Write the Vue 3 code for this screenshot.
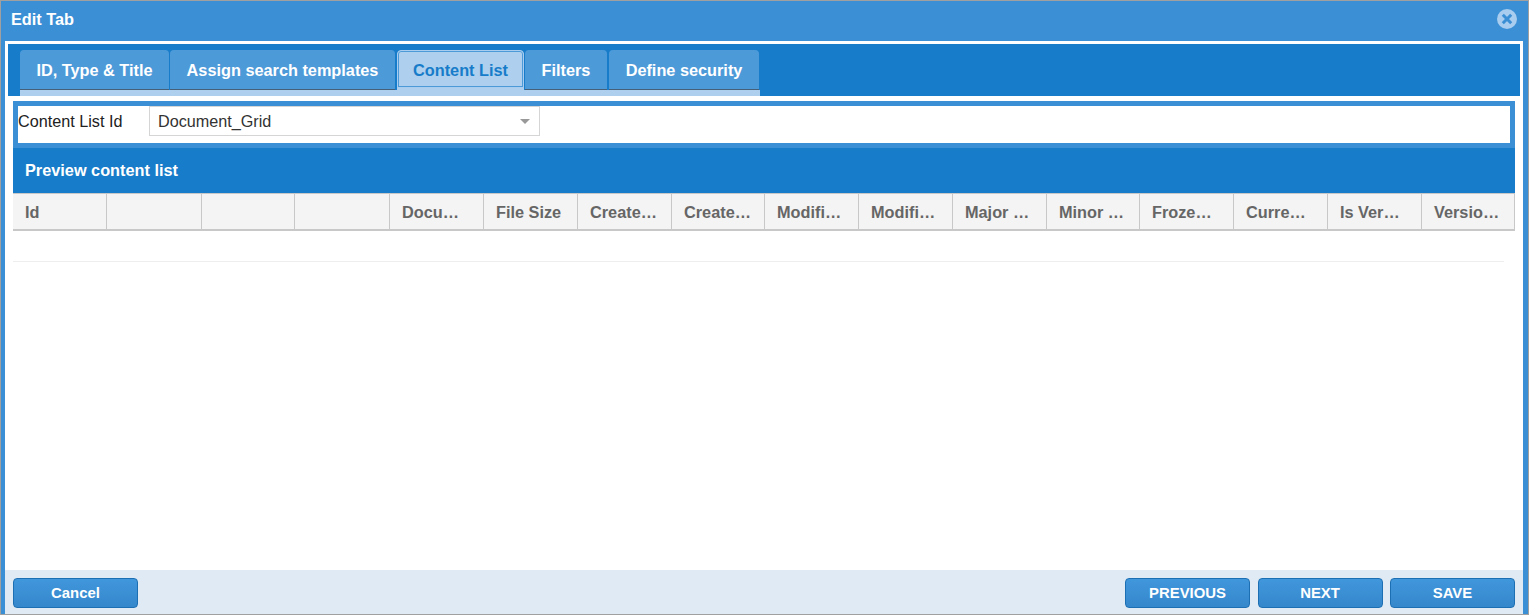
<script setup>
const tabs = [
    { label: 'ID, Type & Title', width: 149 },
    { label: 'Assign search templates', width: 225 },
    { label: 'Content List', width: 127, active: true },
    { label: 'Filters', width: 82 },
    { label: 'Define security', width: 150 },
]

const columns = ['Id', '', '', '', 'Docu…', 'File Size', 'Create…', 'Create…', 'Modifi…', 'Modifi…', 'Major …', 'Minor …', 'Froze…', 'Curre…', 'Is Ver…', 'Versio…']
</script>

<template>
    <div class="dialog">
        <div class="titleBar">
            <span class="title">Edit Tab</span>
            <svg class="closeIcon" width="20" height="20" viewBox="0 0 20 20">
                <circle cx="10" cy="10" r="10" fill="#a9cdee" />
                <path d="M5.8 5.8 L14.2 14.2 M14.2 5.8 L5.8 14.2" stroke="#3b8fd5" stroke-width="3" fill="none" />
            </svg>
        </div>
        <div class="body">
            <div class="tabBar">
                <div class="tabs">
                    <div
                        v-for="tab in tabs"
                        :key="tab.label"
                        class="tab"
                        :class="{ active: tab.active }"
                        :style="{ width: tab.width + 'px' }"
                    >{{ tab.label }}</div>
                </div>
            </div>
            <div class="content">
                <div class="formWrap">
                    <div class="form">
                        <label class="fieldLabel">Content List Id</label>
                        <div class="select">
                            <span>Document_Grid</span>
                            <i class="arrow"></i>
                        </div>
                    </div>
                </div>
                <div class="previewHead">Preview content list</div>
                <div class="gridHead">
                    <div v-for="(col, i) in columns" :key="i" class="cell">{{ col }}</div>
                </div>
                <div class="emptyRow"></div>
            </div>
            <div class="footer">
                <button class="btn">Cancel</button>
                <div class="rightBtns">
                    <button class="btn">PREVIOUS</button>
                    <button class="btn">NEXT</button>
                    <button class="btn">SAVE</button>
                </div>
            </div>
        </div>
    </div>
</template>

<style>
html, body {
    margin: 0;
    height: 100%;
    overflow: hidden;
}
</style>

<style scoped>
.dialog {
    box-sizing: border-box;
    width: 1529px;
    height: 615px;
    display: flex;
    flex-direction: column;
    padding: 0 5px 0 4px;
    background-color: #3b8fd5;
    border: 1px solid #a0a0a0;
    font-family: "Liberation Sans", Arial, sans-serif;
}

.titleBar {
    box-sizing: border-box;
    flex: none;
    height: 40px;
    display: flex;
    align-items: center;
    justify-content: space-between;
    padding: 0 6px 4px 6px;
}

.title {
    color: #fff;
    font-size: 16.3px;
    font-weight: bold;
}

.body {
    flex: 1;
    min-height: 0;
    display: flex;
    flex-direction: column;
    background-color: #fff;
}

.tabBar {
    flex: none;
    height: 52px;
    margin: 3px 3px 0;
    padding: 6px 0 0 12px;
    box-sizing: border-box;
    background-color: #177cc9;
}

.tabs {
    display: flex;
    gap: 1px;
    width: 740px;
    height: 46px;
    background: linear-gradient(transparent 40px, #aed0ee 40px);
}

.tab {
    box-sizing: border-box;
    height: 40px;
    border-radius: 4px 4px 0 0;
    border-bottom: 1px solid #46607a;
    background-color: #4d9ad9;
    color: #fff;
    font-size: 16.3px;
    font-weight: bold;
    line-height: 41px;
    text-align: center;
}

.tab:nth-child(2),
.tab:nth-child(4) {
    margin-right: 1px;
}

.tab.active {
    height: 38px;
    border: 1px solid #a9cdee;
    box-shadow: inset 0 0 0 1px #4d9ad9, 0 2px 0 #aed0ee;
    background-color: #aed0ee;
    color: #177cc9;
    line-height: 38px;
}

.content {
    flex: 1;
    min-height: 0;
    padding: 5px 8px 0;
}

.formWrap {
    height: 47px;
    box-sizing: border-box;
    padding: 5px;
    background-color: #3b8fd5;
}

.form {
    height: 37px;
    display: flex;
    align-items: flex-start;
    background-color: #fff;
}

.fieldLabel {
    width: 131px;
    color: #222;
    font-size: 16.2px;
    line-height: 30px;
}

.select {
    box-sizing: border-box;
    width: 391px;
    height: 30px;
    display: flex;
    align-items: center;
    justify-content: space-between;
    padding: 0 9px 0 8px;
    border: 1px solid #d5d5d5;
    color: #333;
    font-size: 16.2px;
}

.arrow {
    width: 0;
    height: 0;
    border-left: 5px solid transparent;
    border-right: 5px solid transparent;
    border-top: 5px solid #999;
}

.previewHead {
    height: 45px;
    padding-left: 12px;
    background-color: #177cc9;
    color: #fff;
    font-size: 16.3px;
    font-weight: bold;
    line-height: 45px;
}

.gridHead {
    display: grid;
    grid-template-columns: 94px 95px 93px 95px 94px 94px 94px 93px 94px 94px 94px 93px 94px 94px 94px 93px;
    box-sizing: border-box;
    height: 38px;
    background-color: #f4f4f4;
    border-top: 1px solid #c8c8c8;
    border-bottom: 2px solid #c8c8c8;
}

.cell {
    box-sizing: border-box;
    padding-left: 12px;
    border-right: 1px solid #c8c8c8;
    color: #666;
    font-size: 16.3px;
    font-weight: bold;
    line-height: 37px;
    overflow: hidden;
    white-space: nowrap;
}

.emptyRow {
    height: 30px;
    margin-right: 11px;
    border-bottom: 1px solid #eee;
}

.footer {
    flex: none;
    height: 44px;
    display: flex;
    align-items: flex-start;
    justify-content: space-between;
    padding: 8px 8px 0;
    box-sizing: border-box;
    background-color: #e0eaf4;
}

.rightBtns {
    display: flex;
    gap: 7.5px;
}

.btn {
    box-sizing: border-box;
    width: 125px;
    height: 30px;
    padding: 0;
    border: 1px solid #1c6fb3;
    border-radius: 4px;
    background: linear-gradient(#4197dc, #3587cb);
    color: #fff;
    font-family: inherit;
    font-size: 14.9px;
    font-weight: bold;
}
</style>
